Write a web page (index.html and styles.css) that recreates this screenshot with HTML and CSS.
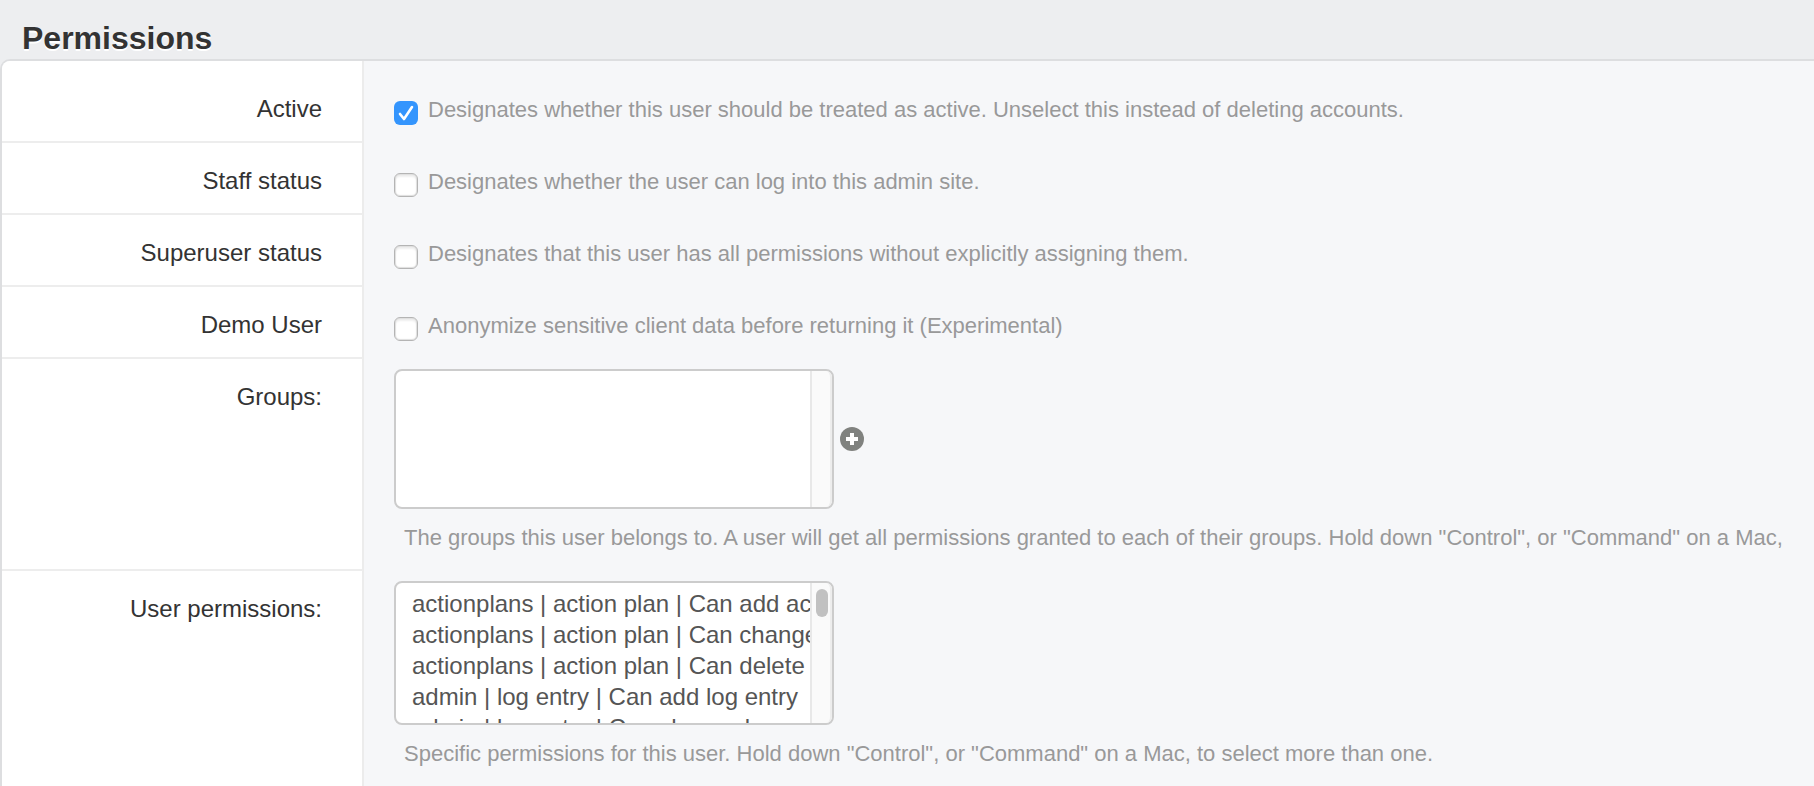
FILE: index.html
```html
<!DOCTYPE html>
<html lang="en">
<head>
<meta charset="utf-8">
<title>Permissions</title>
<link rel="stylesheet" href="styles.css">
</head>
<body>
<form class="page">
  <h2 class="title">Permissions</h2>
  <div class="panel">
    <div class="row row-first">
      <div class="label-cell"><label for="active">Active</label></div>
      <div class="check-cell">
        <input class="check" type="checkbox" id="active" aria-describedby="active-help" checked>
        <span class="help" id="active-help">Designates whether this user should be treated as active. Unselect this instead of deleting accounts.</span>
      </div>
    </div>
    <div class="row">
      <div class="label-cell"><label for="staff">Staff status</label></div>
      <div class="check-cell">
        <input class="check" type="checkbox" id="staff" aria-describedby="staff-help">
        <span class="help" id="staff-help">Designates whether the user can log into this admin site.</span>
      </div>
    </div>
    <div class="row">
      <div class="label-cell"><label for="superuser">Superuser status</label></div>
      <div class="check-cell">
        <input class="check" type="checkbox" id="superuser" aria-describedby="superuser-help">
        <span class="help" id="superuser-help">Designates that this user has all permissions without explicitly assigning them.</span>
      </div>
    </div>
    <div class="row">
      <div class="label-cell"><label for="demo">Demo User</label></div>
      <div class="check-cell">
        <input class="check" type="checkbox" id="demo" aria-describedby="demo-help">
        <span class="help" id="demo-help">Anonymize sensitive client data before returning it (Experimental)</span>
      </div>
    </div>
    <div class="row">
      <div class="label-cell"><label for="groups">Groups:</label></div>
      <div class="select-cell">
        <div class="picker">
          <div class="list-wrap">
            <select class="list list-empty" id="groups" multiple aria-describedby="groups-help"></select>
            <div class="scrollbar" aria-hidden="true"></div>
          </div>
          <button class="add" type="button" aria-label="Add group">
            <svg class="add-icon" viewBox="0 0 24 24" aria-hidden="true">
              <circle cx="12" cy="12" r="12" fill="#80827f"/>
              <path d="M10 6h4v4h4v4h-4v4h-4v-4H6v-4h4z" fill="#fff"/>
            </svg>
          </button>
        </div>
        <p class="help help-block" id="groups-help">The groups this user belongs to. A user will get all permissions granted to each of their groups. Hold down "Control", or "Command" on a Mac,</p>
      </div>
    </div>
    <div class="row row-last">
      <div class="label-cell"><label for="permissions">User permissions:</label></div>
      <div class="select-cell">
        <div class="picker">
          <div class="list-wrap">
            <select class="list" id="permissions" multiple aria-describedby="permissions-help">
              <option>actionplans | action plan | Can add action plan</option>
              <option>actionplans | action plan | Can change action plan</option>
              <option>actionplans | action plan | Can delete action plan</option>
              <option>admin | log entry | Can add log entry</option>
              <option>admin | log entry | Can change log entry</option>
            </select>
            <div class="scrollbar" aria-hidden="true"><div class="thumb"></div></div>
          </div>
        </div>
        <p class="help help-block" id="permissions-help">Specific permissions for this user. Hold down "Control", or "Command" on a Mac, to select more than one.</p>
      </div>
    </div>
  </div>
</form>
</body>
</html>
```
FILE: styles.css
```css
* {
  box-sizing: border-box;
}

body {
  margin: 0;
  background: #edeef0;
  color: #333;
  font-family: "Liberation Sans", Arial, sans-serif;
  font-size: 24px;
  line-height: 32px;
}

.page {
  display: flex;
  flex-direction: column;
  min-height: 100vh;
  overflow: hidden;
}

.title {
  margin: 0;
  padding: 18px 22px 1px;
  font-size: 32px;
  line-height: 40px;
  text-shadow: 0 2px 0 #fff;
}

.panel {
  display: flex;
  flex: 1;
  flex-direction: column;
  overflow: hidden;
  border: 2px solid #dddee0;
  border-right: 0;
  border-bottom: 0;
  border-radius: 10px 0 0 0;
  background: #f6f7f9;
}

.row {
  display: grid;
  grid-template-columns: 362px minmax(0, 1fr);
}

.row-last {
  flex: 1;
}

.label-cell {
  padding: 22px 40px 16px 20px;
  border-right: 2px solid #ececec;
  border-bottom: 2px solid #ededed;
  background: #fff;
  text-align: right;
}

.row-first .label-cell,
.row-first .check-cell {
  padding-top: 32px;
}

.row-last .label-cell {
  border-bottom: 0;
}

.check-cell {
  display: flex;
  align-items: flex-start;
  gap: 10px;
  padding: 22px 0 0 30px;
}

.check {
  flex: none;
  width: 24px;
  height: 24px;
  margin: 8px 0 0;
  appearance: none;
  border: 1px solid #b4b4b4;
  border-radius: 6px;
  background: #fff;
  box-shadow: inset 0 0 1px 1px #dedede, inset 0 3px 2px #efefef;
}

.check:checked {
  border: 0;
  background: #3495fd url("data:image/svg+xml,%3Csvg xmlns='http://www.w3.org/2000/svg' viewBox='0 0 24 24'%3E%3Cpath d='M6 13l4 5 8-12' fill='none' stroke='%23fff' stroke-width='2.6' stroke-linecap='round' stroke-linejoin='round'/%3E%3C/svg%3E");
  box-shadow: none;
}

.help {
  color: #999;
  font-size: 22px;
  line-height: 34px;
  white-space: nowrap;
}

.select-cell {
  padding: 10px 0 16px 30px;
}

.picker {
  display: flex;
  align-items: center;
  gap: 6px;
}

.list-wrap {
  position: relative;
  width: 440px;
}

.list {
  display: block;
  width: 100%;
  height: 144px;
  padding: 7px 0 0;
  overflow: hidden;
  border: 2px solid #ccc;
  border-radius: 8px;
  outline: 0;
  background: #fff;
  color: #555;
  font-family: inherit;
  font-size: 24px;
}

.list-empty {
  height: 140px;
}

.list option {
  min-height: 31px;
  padding: 0 16px;
  line-height: 31px;
}

.scrollbar {
  position: absolute;
  top: 2px;
  right: 2px;
  bottom: 2px;
  width: 22px;
  padding: 6px 2px 0 4px;
  border-right: 2px solid #ededed;
  border-left: 2px solid #e8e8e8;
  border-radius: 0 6px 6px 0;
  background: #fafafa;
}

.thumb {
  width: 12px;
  height: 28px;
  border-radius: 6px;
  background: #c1c1c1;
}

.add {
  width: 24px;
  height: 24px;
  padding: 0;
  border: 0;
  background: none;
}

.add-icon {
  display: block;
}

.help-block {
  margin: 12px 0 0 10px;
}
```
